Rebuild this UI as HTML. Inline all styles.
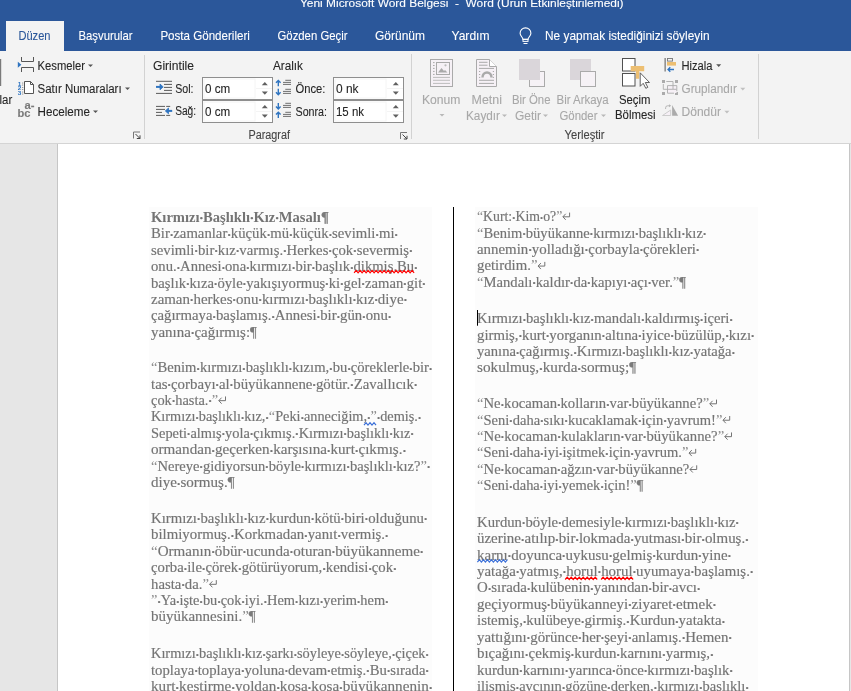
<!DOCTYPE html>
<html><head><meta charset="utf-8"><title>Word</title>
<style>html,body{margin:0;padding:0;width:851px;height:691px;overflow:hidden;background:#e6e6e6}</style>
</head><body><svg width="851" height="691" viewBox="0 0 851 691" style="display:block;will-change:transform"><rect x="0" y="0" width="851" height="51" fill="#2b579a"/><rect x="0" y="51" width="851" height="92" fill="#f3f3f3"/><rect x="0" y="143" width="851" height="1" fill="#d4d4d4"/><rect x="0" y="144" width="851" height="547" fill="#e6e6e6"/><rect x="57" y="144" width="793" height="547" fill="#c6c6c6"/><rect x="58" y="144" width="791" height="547" fill="#ffffff"/><rect x="6" y="21" width="58" height="30" fill="#f3f3f3"/><text x="300" y="7.3" font-size="11" fill="#ffffff" font-family="Liberation Sans" textLength="323.5" lengthAdjust="spacingAndGlyphs" stroke="#ffffff" stroke-width="0.1">Yeni Microsoft Word Belgesi  -  Word (Ürün Etkinleştirilemedi)</text><text x="18.4" y="40" font-size="13" fill="#2b579a" font-family="Liberation Sans" textLength="32.1" lengthAdjust="spacingAndGlyphs" stroke="#2b579a" stroke-width="0.1">Düzen</text><text x="78.5" y="40" font-size="13" fill="#ffffff" font-family="Liberation Sans" textLength="54.1" lengthAdjust="spacingAndGlyphs" stroke="#ffffff" stroke-width="0.1">Başvurular</text><text x="160.4" y="40" font-size="13" fill="#ffffff" font-family="Liberation Sans" textLength="89.5" lengthAdjust="spacingAndGlyphs" stroke="#ffffff" stroke-width="0.1">Posta Gönderileri</text><text x="277.5" y="40" font-size="13" fill="#ffffff" font-family="Liberation Sans" textLength="70.0" lengthAdjust="spacingAndGlyphs" stroke="#ffffff" stroke-width="0.1">Gözden Geçir</text><text x="375" y="40" font-size="13" fill="#ffffff" font-family="Liberation Sans" textLength="50" lengthAdjust="spacingAndGlyphs" stroke="#ffffff" stroke-width="0.1">Görünüm</text><text x="451.5" y="40" font-size="13" fill="#ffffff" font-family="Liberation Sans" textLength="38.0" lengthAdjust="spacingAndGlyphs" stroke="#ffffff" stroke-width="0.1">Yardım</text><text x="545" y="40" font-size="13" fill="#ffffff" font-family="Liberation Sans" textLength="164.5" lengthAdjust="spacingAndGlyphs" stroke="#ffffff" stroke-width="0.1">Ne yapmak istediğinizi söyleyin</text><rect x="0" y="59" width="1.2" height="27" fill="#7a7a7a"/><text x="-0.5" y="103.6" font-size="12" fill="#262626" font-family="Liberation Sans" textLength="12.7" lengthAdjust="spacingAndGlyphs" stroke="#262626" stroke-width="0.1">lar</text><path d="M17.8 61.8l3.6 3-3.6 3z" fill="#2f74c0"/><path d="M21.5 57v4.5h12v-4.5M21.5 72v-4.5h12v4.5" stroke="#555" fill="none" stroke-width="1"/><text x="37.5" y="69.7" font-size="12" fill="#262626" font-family="Liberation Sans" textLength="47.5" lengthAdjust="spacingAndGlyphs" stroke="#262626" stroke-width="0.1">Kesmeler</text><path d="M88 64.5h5l-2.5 2.6z" fill="#555"/><path d="M24.5 81.5h6l3 3v9h-9z" stroke="#555" fill="#fff" stroke-width="1"/><path d="M30.5 81.5v3h3" stroke="#555" fill="none" stroke-width="1"/><text x="17.8" y="85.9" font-family="Liberation Sans" font-weight="bold" font-size="5.2" fill="#2f74c0" textLength="3.6" lengthAdjust="spacingAndGlyphs">1</text><rect x="22.3" y="82.6" width="0.9" height="0.9" fill="#666"/><rect x="22.3" y="84.6" width="0.9" height="0.9" fill="#666"/><text x="17.8" y="90.4" font-family="Liberation Sans" font-weight="bold" font-size="5.2" fill="#2f74c0" textLength="3.6" lengthAdjust="spacingAndGlyphs">2</text><rect x="22.3" y="87.1" width="0.9" height="0.9" fill="#666"/><rect x="22.3" y="89.1" width="0.9" height="0.9" fill="#666"/><text x="17.8" y="94.9" font-family="Liberation Sans" font-weight="bold" font-size="5.2" fill="#2f74c0" textLength="3.6" lengthAdjust="spacingAndGlyphs">3</text><rect x="22.3" y="91.6" width="0.9" height="0.9" fill="#666"/><rect x="22.3" y="93.6" width="0.9" height="0.9" fill="#666"/><text x="37.5" y="92.5" font-size="12" fill="#262626" font-family="Liberation Sans" textLength="84.1" lengthAdjust="spacingAndGlyphs" stroke="#262626" stroke-width="0.1">Satır Numaraları</text><path d="M125 87.5h5l-2.5 2.6z" fill="#555"/><text x="17.5" y="117" font-size="11.5" fill="#7a7a7a" font-family="Liberation Sans" textLength="13" lengthAdjust="spacingAndGlyphs" font-weight="bold" stroke="#7a7a7a" stroke-width="0.1">bc</text><text x="24.5" y="109" font-size="10" fill="#7a7a7a" font-family="Liberation Sans" textLength="10" lengthAdjust="spacingAndGlyphs" font-weight="bold" stroke="#7a7a7a" stroke-width="0.1">a-</text><text x="37.5" y="115.8" font-size="12" fill="#262626" font-family="Liberation Sans" textLength="52.5" lengthAdjust="spacingAndGlyphs" stroke="#262626" stroke-width="0.1">Heceleme</text><path d="M93 110.5h5l-2.5 2.6z" fill="#555"/><path d="M133.5 138.5V132.0H140" stroke="#777" fill="none" stroke-width="1"/><path d="M135.5 134.0L140 138.5M140 135.3V138.5H136.8" stroke="#444" fill="none" stroke-width="1"/><rect x="144" y="55" width="1" height="84" fill="#d2d2d2"/><text x="153" y="69.7" font-size="12" fill="#262626" font-family="Liberation Sans" textLength="41" lengthAdjust="spacingAndGlyphs" stroke="#262626" stroke-width="0.1">Girintile</text><text x="273" y="69.7" font-size="12" fill="#262626" font-family="Liberation Sans" textLength="30" lengthAdjust="spacingAndGlyphs" stroke="#262626" stroke-width="0.1">Aralık</text><path d="M156 81.3h16M164 84.4h8M164 87.4h8M164 90.4h8M156 93.4h16" stroke="#5a5a5a" stroke-width="1" fill="none"/><path d="M156 86.9h4.5" stroke="#2f74c0" stroke-width="2"/><path d="M160 84l3.2 2.9-3.2 2.9z" fill="#2f74c0" stroke="#2f74c0" stroke-width="0.8" stroke-linejoin="round"/><text x="175.2" y="92.6" font-size="12" fill="#262626" font-family="Liberation Sans" textLength="18.3" lengthAdjust="spacingAndGlyphs" stroke="#262626" stroke-width="0.1">Sol:</text><path d="M156 106.4h9M166.2 106.4h4M156 109.4h9M156 112.4h6M156 115.4h9M166.2 115.4h4" stroke="#5a5a5a" stroke-width="1" fill="none"/><path d="M168 110.9h4.2" stroke="#2f74c0" stroke-width="2"/><path d="M168.5 108l-3.2 2.9 3.2 2.9z" fill="#2f74c0" stroke="#2f74c0" stroke-width="0.8" stroke-linejoin="round"/><text x="175.2" y="114.8" font-size="12" fill="#262626" font-family="Liberation Sans" textLength="20.9" lengthAdjust="spacingAndGlyphs" stroke="#262626" stroke-width="0.1">Sağ:</text><rect x="202.5" y="77.5" width="70" height="22" fill="#ffffff" stroke="#8e8e8e" stroke-width="1"/><rect x="204" y="79" width="51" height="19" fill="none" stroke="#f4f4f4" stroke-width="1"/><rect x="256" y="88" width="16" height="0.8" fill="#f2f2f2"/><path d="M261.8 85.2l3-3.1 3 3.1z" fill="#606060"/><path d="M261.8 91.6l3 3.1 3-3.1z" fill="#606060"/><text x="205" y="92.6" font-size="12" fill="#262626" font-family="Liberation Sans" textLength="25.2" lengthAdjust="spacingAndGlyphs" stroke="#262626" stroke-width="0.1">0 cm</text><rect x="202.5" y="100.5" width="70" height="22" fill="#ffffff" stroke="#8e8e8e" stroke-width="1"/><rect x="204" y="102" width="51" height="19" fill="none" stroke="#f4f4f4" stroke-width="1"/><rect x="256" y="111" width="16" height="0.8" fill="#f2f2f2"/><path d="M261.8 108.2l3-3.1 3 3.1z" fill="#606060"/><path d="M261.8 114.6l3 3.1 3-3.1z" fill="#606060"/><text x="205" y="115.6" font-size="12" fill="#262626" font-family="Liberation Sans" textLength="25.2" lengthAdjust="spacingAndGlyphs" stroke="#262626" stroke-width="0.1">0 cm</text><rect x="333.5" y="77.5" width="70" height="22" fill="#ffffff" stroke="#8e8e8e" stroke-width="1"/><rect x="335" y="79" width="51" height="19" fill="none" stroke="#f4f4f4" stroke-width="1"/><rect x="387" y="88" width="16" height="0.8" fill="#f2f2f2"/><path d="M392.8 85.2l3-3.1 3 3.1z" fill="#606060"/><path d="M392.8 91.6l3 3.1 3-3.1z" fill="#606060"/><text x="336" y="92.6" font-size="12" fill="#262626" font-family="Liberation Sans" textLength="22.5" lengthAdjust="spacingAndGlyphs" stroke="#262626" stroke-width="0.1">0 nk</text><rect x="333.5" y="100.5" width="70" height="22" fill="#ffffff" stroke="#8e8e8e" stroke-width="1"/><rect x="335" y="102" width="51" height="19" fill="none" stroke="#f4f4f4" stroke-width="1"/><rect x="387" y="111" width="16" height="0.8" fill="#f2f2f2"/><path d="M392.8 108.2l3-3.1 3 3.1z" fill="#606060"/><path d="M392.8 114.6l3 3.1 3-3.1z" fill="#606060"/><text x="336" y="115.6" font-size="12" fill="#262626" font-family="Liberation Sans" textLength="28" lengthAdjust="spacingAndGlyphs" stroke="#262626" stroke-width="0.1">15 nk</text><path d="M278.3 86.3V80.6M276 82.8l2.3-2.4 2.3 2.4M278.3 88.8V94.6M276 92.3l2.3 2.4 2.3-2.4" stroke="#2f74c0" stroke-width="1.4" fill="none"/><path d="M285.3 80.3h5.7M283 82.4h8M283 84.4h8" stroke="#5e5e5e" stroke-width="0.9" fill="none"/><path d="M285.3 89.3h5.7M283 91.4h8M283 93.4h8" stroke="#5e5e5e" stroke-width="0.9" fill="none"/><text x="295.5" y="92.6" font-size="12" fill="#262626" font-family="Liberation Sans" textLength="29.9" lengthAdjust="spacingAndGlyphs" stroke="#262626" stroke-width="0.1">Önce:</text><path d="M278.3 103V108.8M276 106.5l2.3 2.4 2.3-2.4M278.3 118.1V112.39999999999999M276 114.6l2.3-2.4 2.3 2.4" stroke="#2f74c0" stroke-width="1.4" fill="none"/><path d="M285.3 103.3h5.7M283 105.4h8M283 107.4h8" stroke="#5e5e5e" stroke-width="0.9" fill="none"/><path d="M285.3 112.3h5.7M283 114.4h8M283 116.4h8" stroke="#5e5e5e" stroke-width="0.9" fill="none"/><text x="295.5" y="115.6" font-size="12" fill="#262626" font-family="Liberation Sans" textLength="31.5" lengthAdjust="spacingAndGlyphs" stroke="#262626" stroke-width="0.1">Sonra:</text><text x="248.5" y="138.8" font-size="12" fill="#444444" font-family="Liberation Sans" textLength="41.5" lengthAdjust="spacingAndGlyphs" stroke="#444444" stroke-width="0.1">Paragraf</text><path d="M400.5 139V132.5H407" stroke="#777" fill="none" stroke-width="1"/><path d="M402.5 134.5L407 139M407 135.8V139H403.8" stroke="#444" fill="none" stroke-width="1"/><rect x="411" y="54" width="1" height="85" fill="#d2d2d2"/><rect x="430.5" y="59.5" width="22" height="27" fill="#f6f1f6" stroke="#aaaaaa" stroke-width="1"/><rect x="436.5" y="62.5" width="13" height="12" fill="none" stroke="#aaaaaa" stroke-width="1"/><rect x="433" y="62.1" width="1.6" height="1" fill="#aaaaaa"/><rect x="433" y="65.0" width="1.6" height="1" fill="#aaaaaa"/><rect x="433" y="67.9" width="1.6" height="1" fill="#aaaaaa"/><rect x="433" y="70.9" width="1.6" height="1" fill="#aaaaaa"/><rect x="433" y="73.9" width="1.6" height="1" fill="#aaaaaa"/><rect x="433" y="76.9" width="17" height="1" fill="#bdbdbd"/><rect x="433" y="79.8" width="17" height="1" fill="#bdbdbd"/><rect x="433" y="82.9" width="17" height="1" fill="#bdbdbd"/><path d="M438 72.5l3.5-4.5 2.5 3 1-1 2.5 2.5z" fill="#aaaaaa"/><circle cx="445.5" cy="65.3" r="1.1" fill="#bbbbbb"/><text x="422" y="104" font-size="12" fill="#a8a8a8" font-family="Liberation Sans" textLength="38.5" lengthAdjust="spacingAndGlyphs" stroke="#a8a8a8" stroke-width="0.1">Konum</text><path d="M439.5 114h5l-2.5 2.6z" fill="#b8b8b8"/><path d="M476.5 59.5h13l7 7v20h-20z" fill="#f6f1f6" stroke="#aaaaaa" stroke-width="1"/><path d="M489.5 59.5v7h7" fill="#ffffff" stroke="#aaaaaa" stroke-width="1"/><rect x="479" y="61.8" width="8.5" height="1" fill="#aaaaaa"/><rect x="479" y="64.7" width="8.5" height="1" fill="#aaaaaa"/><rect x="479" y="67.9" width="15" height="1" fill="#aaaaaa"/><rect x="479" y="79.8" width="15" height="1" fill="#aaaaaa"/><rect x="479" y="82.9" width="15" height="1" fill="#aaaaaa"/><rect x="479" y="71.0" width="1.2" height="1" fill="#aaaaaa"/><rect x="492.8" y="71.0" width="1.2" height="1" fill="#aaaaaa"/><rect x="479" y="74.0" width="1.2" height="1" fill="#aaaaaa"/><rect x="492.8" y="74.0" width="1.2" height="1" fill="#aaaaaa"/><rect x="479" y="76.9" width="1.2" height="1" fill="#aaaaaa"/><rect x="492.8" y="76.9" width="1.2" height="1" fill="#aaaaaa"/><path d="M482.5 77.5a4 4.5 0 0 1 9 0" stroke="#aaaaaa" stroke-width="2.4" fill="none"/><text x="471.6" y="104" font-size="12" fill="#a8a8a8" font-family="Liberation Sans" textLength="30.4" lengthAdjust="spacingAndGlyphs" stroke="#a8a8a8" stroke-width="0.1">Metni</text><text x="466" y="119.5" font-size="12" fill="#a8a8a8" font-family="Liberation Sans" textLength="34" lengthAdjust="spacingAndGlyphs" stroke="#a8a8a8" stroke-width="0.1">Kaydır</text><path d="M502 114.5h5l-2.5 2.6z" fill="#b8b8b8"/><rect x="529.5" y="71.5" width="15" height="15" fill="#f6f2f6" stroke="#aaaaaa" stroke-width="1"/><rect x="519" y="59" width="21" height="21" fill="#dad6da"/><text x="512" y="104" font-size="12" fill="#a8a8a8" font-family="Liberation Sans" textLength="38.5" lengthAdjust="spacingAndGlyphs" stroke="#a8a8a8" stroke-width="0.1">Bir Öne</text><text x="515" y="119.5" font-size="12" fill="#a8a8a8" font-family="Liberation Sans" textLength="26" lengthAdjust="spacingAndGlyphs" stroke="#a8a8a8" stroke-width="0.1">Getir</text><path d="M543 114.5h5l-2.5 2.6z" fill="#b8b8b8"/><rect x="570" y="59" width="21" height="21" fill="#dad6da"/><rect x="580.5" y="71.5" width="15" height="15" fill="#f6f2f6" stroke="#aaaaaa" stroke-width="1"/><text x="556.5" y="104" font-size="12" fill="#a8a8a8" font-family="Liberation Sans" textLength="52.1" lengthAdjust="spacingAndGlyphs" stroke="#a8a8a8" stroke-width="0.1">Bir Arkaya</text><text x="559.5" y="119.5" font-size="12" fill="#a8a8a8" font-family="Liberation Sans" textLength="38" lengthAdjust="spacingAndGlyphs" stroke="#a8a8a8" stroke-width="0.1">Gönder</text><path d="M601 114.5h5l-2.5 2.6z" fill="#b8b8b8"/><rect x="622.5" y="58.5" width="12.5" height="12.5" fill="#ffffff" stroke="#505050" stroke-width="1"/><rect x="622.5" y="73.5" width="12.5" height="12.5" fill="#ffffff" stroke="#505050" stroke-width="1"/><path d="M630.7 66h13.5v5.2h-5v7.6h-3.2v-7.6h-5.3z" fill="#edbf72"/><path d="M640.2 72.8v13.5l3-3 2.6 5 2-1-2.5-4.8h4.2z" fill="#ffffff" stroke="#505050" stroke-width="0.9" stroke-linejoin="round"/><text x="619" y="103.7" font-size="12" fill="#262626" font-family="Liberation Sans" textLength="31.5" lengthAdjust="spacingAndGlyphs" stroke="#262626" stroke-width="0.1">Seçim</text><text x="615" y="119.4" font-size="12" fill="#262626" font-family="Liberation Sans" textLength="40.5" lengthAdjust="spacingAndGlyphs" stroke="#262626" stroke-width="0.1">Bölmesi</text><rect x="664.6" y="58" width="1" height="13.5" fill="#555"/><rect x="667.5" y="58.5" width="5" height="2.6" fill="none" stroke="#777" stroke-width="0.9"/><rect x="667" y="62" width="9" height="3.6" fill="#edbf72"/><path d="M668 69.5h6M670.3 67.3l-2.3 2.2 2.3 2.2" stroke="#2f74c0" stroke-width="1.3" fill="none"/><text x="681.5" y="69.7" font-size="12" fill="#262626" font-family="Liberation Sans" textLength="31" lengthAdjust="spacingAndGlyphs" stroke="#262626" stroke-width="0.1">Hizala</text><path d="M716.2 64.3h5l-2.5 2.6z" fill="#555"/><rect x="662" y="80" width="3" height="3" fill="#ababab"/><rect x="675" y="80" width="3" height="3" fill="#ababab"/><rect x="662" y="92" width="3" height="3" fill="#ababab"/><rect x="675" y="92" width="3" height="3" fill="#ababab"/><rect x="667.5" y="85.5" width="9" height="7.5" fill="#f6f0f6"/><path d="M666.3 81.5h6.7v7.5M663.3 84v5.3h13.2M667.5 85.6h9.3v5.5M667.5 85.6v7.6h6.5" stroke="#ababab" stroke-width="0.9" fill="none"/><text x="681.5" y="92.6" font-size="12" fill="#a8a8a8" font-family="Liberation Sans" textLength="55.5" lengthAdjust="spacingAndGlyphs" stroke="#a8a8a8" stroke-width="0.1">Gruplandır</text><path d="M740.3 87.8h5l-2.5 2.6z" fill="#c0c0c0"/><path d="M662.5 115.5h8.2v-5.5z" fill="#f6f0f6" stroke="#c8c8c8" stroke-width="0.9" stroke-linejoin="round"/><path d="M672.1 105v10.8h6z" fill="#ababab"/><path d="M665.6 109v-1.2a2 2 0 0 1 2-2h2" stroke="#b5b5b5" stroke-width="1" fill="none"/><path d="M669 104.3l2.2 1.5-2.2 1.5z" fill="#b5b5b5"/><text x="681.5" y="115.5" font-size="12" fill="#a8a8a8" font-family="Liberation Sans" textLength="39.5" lengthAdjust="spacingAndGlyphs" stroke="#a8a8a8" stroke-width="0.1">Döndür</text><path d="M724.4 110.8h5l-2.5 2.6z" fill="#c0c0c0"/><text x="564.6" y="138.6" font-size="12" fill="#444444" font-family="Liberation Sans" textLength="40" lengthAdjust="spacingAndGlyphs" stroke="#444444" stroke-width="0.1">Yerleştir</text><rect x="758" y="54" width="1" height="85" fill="#d2d2d2"/><path d="M522.9 39.3c0-2-2.8-3.3-2.8-6a5.4 5.4 0 0 1 10.8 0c0 2.7-2.8 4-2.8 6z" fill="none" stroke="#ffffff" stroke-width="1.1"/><rect x="523" y="39.4" width="5" height="2" fill="none" stroke="#ffffff" stroke-width="1"/><rect x="523.5" y="43" width="4" height="1" fill="#ffffff"/><rect x="149" y="207" width="283" height="484" fill="#fcfcfc"/><rect x="475" y="207" width="283" height="484" fill="#fcfcfc"/><rect x="453" y="207" width="1" height="484" fill="#000000"/><text x="151" y="221.8" font-size="14.5" fill="#747474" font-family="Liberation Serif" textLength="177.8" lengthAdjust="spacingAndGlyphs" font-weight="bold" stroke="#747474" stroke-width="0">Kırmızı<tspan dx="0.1" dy="-0.5" font-size="9.2">•</tspan><tspan dx="0.1" dy="0.5" font-size="14.5">Başlıklı</tspan><tspan dx="0.1" dy="-0.5" font-size="9.2">•</tspan><tspan dx="0.1" dy="0.5" font-size="14.5">Kız</tspan><tspan dx="0.1" dy="-0.5" font-size="9.2">•</tspan><tspan dx="0.1" dy="0.5" font-size="14.5">Masalı<tspan stroke-width="0.25" fill="#7a7a7a" stroke="#7a7a7a">¶</tspan></tspan></text><text x="151" y="238.23" font-size="14.5" fill="#747474" font-family="Liberation Serif" textLength="246.9" lengthAdjust="spacingAndGlyphs" stroke="#747474" stroke-width="0.16">Bir<tspan dx="0.1" dy="-0.5" font-size="9.2">•</tspan><tspan dx="0.1" dy="0.5" font-size="14.5">zamanlar</tspan><tspan dx="0.1" dy="-0.5" font-size="9.2">•</tspan><tspan dx="0.1" dy="0.5" font-size="14.5">küçük</tspan><tspan dx="0.1" dy="-0.5" font-size="9.2">•</tspan><tspan dx="0.1" dy="0.5" font-size="14.5">mü</tspan><tspan dx="0.1" dy="-0.5" font-size="9.2">•</tspan><tspan dx="0.1" dy="0.5" font-size="14.5">küçük</tspan><tspan dx="0.1" dy="-0.5" font-size="9.2">•</tspan><tspan dx="0.1" dy="0.5" font-size="14.5">sevimli</tspan><tspan dx="0.1" dy="-0.5" font-size="9.2">•</tspan><tspan dx="0.1" dy="0.5" font-size="14.5">mi</tspan><tspan dx="0.1" dy="-0.5" font-size="9.2">•</tspan></text><text x="151" y="254.66" font-size="14.5" fill="#747474" font-family="Liberation Serif" textLength="261.5" lengthAdjust="spacingAndGlyphs" stroke="#747474" stroke-width="0.16">sevimli<tspan dx="0.1" dy="-0.5" font-size="9.2">•</tspan><tspan dx="0.1" dy="0.5" font-size="14.5">bir</tspan><tspan dx="0.1" dy="-0.5" font-size="9.2">•</tspan><tspan dx="0.1" dy="0.5" font-size="14.5">kız</tspan><tspan dx="0.1" dy="-0.5" font-size="9.2">•</tspan><tspan dx="0.1" dy="0.5" font-size="14.5">varmış.</tspan><tspan dx="0.1" dy="-0.5" font-size="9.2">•</tspan><tspan dx="0.1" dy="0.5" font-size="14.5">Herkes</tspan><tspan dx="0.1" dy="-0.5" font-size="9.2">•</tspan><tspan dx="0.1" dy="0.5" font-size="14.5">çok</tspan><tspan dx="0.1" dy="-0.5" font-size="9.2">•</tspan><tspan dx="0.1" dy="0.5" font-size="14.5">severmiş</tspan><tspan dx="0.1" dy="-0.5" font-size="9.2">•</tspan></text><text x="151" y="271.09" font-size="14.5" fill="#747474" font-family="Liberation Serif" textLength="266.5" lengthAdjust="spacingAndGlyphs" stroke="#747474" stroke-width="0.16">onu.<tspan dx="0.1" dy="-0.5" font-size="9.2">•</tspan><tspan dx="0.1" dy="0.5" font-size="14.5">Annesi</tspan><tspan dx="0.1" dy="-0.5" font-size="9.2">•</tspan><tspan dx="0.1" dy="0.5" font-size="14.5">ona</tspan><tspan dx="0.1" dy="-0.5" font-size="9.2">•</tspan><tspan dx="0.1" dy="0.5" font-size="14.5">kırmızı</tspan><tspan dx="0.1" dy="-0.5" font-size="9.2">•</tspan><tspan dx="0.1" dy="0.5" font-size="14.5">bir</tspan><tspan dx="0.1" dy="-0.5" font-size="9.2">•</tspan><tspan dx="0.1" dy="0.5" font-size="14.5">başlık</tspan><tspan dx="0.1" dy="-0.5" font-size="9.2">•</tspan><tspan dx="0.1" dy="0.5" font-size="14.5">dikmiş.Bu</tspan><tspan dx="0.1" dy="-0.5" font-size="9.2">•</tspan></text><text x="151" y="287.52" font-size="14.5" fill="#747474" font-family="Liberation Serif" textLength="274.6" lengthAdjust="spacingAndGlyphs" stroke="#747474" stroke-width="0.16">başlık<tspan dx="0.1" dy="-0.5" font-size="9.2">•</tspan><tspan dx="0.1" dy="0.5" font-size="14.5">kıza</tspan><tspan dx="0.1" dy="-0.5" font-size="9.2">•</tspan><tspan dx="0.1" dy="0.5" font-size="14.5">öyle</tspan><tspan dx="0.1" dy="-0.5" font-size="9.2">•</tspan><tspan dx="0.1" dy="0.5" font-size="14.5">yakışıyormuş</tspan><tspan dx="0.1" dy="-0.5" font-size="9.2">•</tspan><tspan dx="0.1" dy="0.5" font-size="14.5">ki</tspan><tspan dx="0.1" dy="-0.5" font-size="9.2">•</tspan><tspan dx="0.1" dy="0.5" font-size="14.5">gel</tspan><tspan dx="0.1" dy="-0.5" font-size="9.2">•</tspan><tspan dx="0.1" dy="0.5" font-size="14.5">zaman</tspan><tspan dx="0.1" dy="-0.5" font-size="9.2">•</tspan><tspan dx="0.1" dy="0.5" font-size="14.5">git</tspan><tspan dx="0.1" dy="-0.5" font-size="9.2">•</tspan></text><text x="151" y="303.95" font-size="14.5" fill="#747474" font-family="Liberation Serif" textLength="256.0" lengthAdjust="spacingAndGlyphs" stroke="#747474" stroke-width="0.16">zaman<tspan dx="0.1" dy="-0.5" font-size="9.2">•</tspan><tspan dx="0.1" dy="0.5" font-size="14.5">herkes</tspan><tspan dx="0.1" dy="-0.5" font-size="9.2">•</tspan><tspan dx="0.1" dy="0.5" font-size="14.5">onu</tspan><tspan dx="0.1" dy="-0.5" font-size="9.2">•</tspan><tspan dx="0.1" dy="0.5" font-size="14.5">kırmızı</tspan><tspan dx="0.1" dy="-0.5" font-size="9.2">•</tspan><tspan dx="0.1" dy="0.5" font-size="14.5">başlıklı</tspan><tspan dx="0.1" dy="-0.5" font-size="9.2">•</tspan><tspan dx="0.1" dy="0.5" font-size="14.5">kız</tspan><tspan dx="0.1" dy="-0.5" font-size="9.2">•</tspan><tspan dx="0.1" dy="0.5" font-size="14.5">diye</tspan><tspan dx="0.1" dy="-0.5" font-size="9.2">•</tspan></text><text x="151" y="320.38" font-size="14.5" fill="#747474" font-family="Liberation Serif" textLength="240.2" lengthAdjust="spacingAndGlyphs" stroke="#747474" stroke-width="0.16">çağırmaya<tspan dx="0.1" dy="-0.5" font-size="9.2">•</tspan><tspan dx="0.1" dy="0.5" font-size="14.5">başlamış.</tspan><tspan dx="0.1" dy="-0.5" font-size="9.2">•</tspan><tspan dx="0.1" dy="0.5" font-size="14.5">Annesi</tspan><tspan dx="0.1" dy="-0.5" font-size="9.2">•</tspan><tspan dx="0.1" dy="0.5" font-size="14.5">bir</tspan><tspan dx="0.1" dy="-0.5" font-size="9.2">•</tspan><tspan dx="0.1" dy="0.5" font-size="14.5">gün</tspan><tspan dx="0.1" dy="-0.5" font-size="9.2">•</tspan><tspan dx="0.1" dy="0.5" font-size="14.5">onu</tspan><tspan dx="0.1" dy="-0.5" font-size="9.2">•</tspan></text><text x="151" y="336.81" font-size="14.5" fill="#747474" font-family="Liberation Serif" textLength="105.9" lengthAdjust="spacingAndGlyphs" stroke="#747474" stroke-width="0.16">yanına<tspan dx="0.1" dy="-0.5" font-size="9.2">•</tspan><tspan dx="0.1" dy="0.5" font-size="14.5">çağırmış:<tspan stroke-width="0.25" fill="#7a7a7a" stroke="#7a7a7a">¶</tspan></tspan></text><text x="151" y="372.1" font-size="14.5" fill="#747474" font-family="Liberation Serif" textLength="281.3" lengthAdjust="spacingAndGlyphs" stroke="#747474" stroke-width="0.16"><tspan stroke-width="0" fill="#8a8a8a">“</tspan>Benim<tspan dx="0.1" dy="-0.5" font-size="9.2">•</tspan><tspan dx="0.1" dy="0.5" font-size="14.5">kırmızı</tspan><tspan dx="0.1" dy="-0.5" font-size="9.2">•</tspan><tspan dx="0.1" dy="0.5" font-size="14.5">başlıklı</tspan><tspan dx="0.1" dy="-0.5" font-size="9.2">•</tspan><tspan dx="0.1" dy="0.5" font-size="14.5">kızım,</tspan><tspan dx="0.1" dy="-0.5" font-size="9.2">•</tspan><tspan dx="0.1" dy="0.5" font-size="14.5">bu</tspan><tspan dx="0.1" dy="-0.5" font-size="9.2">•</tspan><tspan dx="0.1" dy="0.5" font-size="14.5">çöreklerle</tspan><tspan dx="0.1" dy="-0.5" font-size="9.2">•</tspan><tspan dx="0.1" dy="0.5" font-size="14.5">bir</tspan><tspan dx="0.1" dy="-0.5" font-size="9.2">•</tspan></text><text x="151" y="388.53" font-size="14.5" fill="#747474" font-family="Liberation Serif" textLength="266.3" lengthAdjust="spacingAndGlyphs" stroke="#747474" stroke-width="0.16">tas<tspan dx="0.1" dy="-0.5" font-size="9.2">•</tspan><tspan dx="0.1" dy="0.5" font-size="14.5">çorbayı</tspan><tspan dx="0.1" dy="-0.5" font-size="9.2">•</tspan><tspan dx="0.1" dy="0.5" font-size="14.5">al</tspan><tspan dx="0.1" dy="-0.5" font-size="9.2">•</tspan><tspan dx="0.1" dy="0.5" font-size="14.5">büyükannene</tspan><tspan dx="0.1" dy="-0.5" font-size="9.2">•</tspan><tspan dx="0.1" dy="0.5" font-size="14.5">götür.</tspan><tspan dx="0.1" dy="-0.5" font-size="9.2">•</tspan><tspan dx="0.1" dy="0.5" font-size="14.5">Zavallıcık</tspan><tspan dx="0.1" dy="-0.5" font-size="9.2">•</tspan></text><path d="M225.50 396.46V400.66H218.80M221.60 397.66L218.80 400.66L221.60 403.66" stroke="#747474" stroke-width="1" fill="none"/><text x="151" y="404.96" font-size="14.5" fill="#747474" font-family="Liberation Serif" textLength="67.2" lengthAdjust="spacingAndGlyphs" stroke="#747474" stroke-width="0.16">çok<tspan dx="0.1" dy="-0.5" font-size="9.2">•</tspan><tspan dx="0.1" dy="0.5" font-size="14.5">hasta.</tspan><tspan dx="0.1" dy="-0.5" font-size="9.2">•</tspan><tspan dx="0.1" dy="0.5" font-size="14.5"><tspan stroke-width="0" fill="#8a8a8a">”</tspan></tspan></text><text x="151" y="421.39" font-size="14.5" fill="#747474" font-family="Liberation Serif" textLength="270.2" lengthAdjust="spacingAndGlyphs" stroke="#747474" stroke-width="0.16">Kırmızı<tspan dx="0.1" dy="-0.5" font-size="9.2">•</tspan><tspan dx="0.1" dy="0.5" font-size="14.5">başlıklı</tspan><tspan dx="0.1" dy="-0.5" font-size="9.2">•</tspan><tspan dx="0.1" dy="0.5" font-size="14.5">kız,</tspan><tspan dx="0.1" dy="-0.5" font-size="9.2">•</tspan><tspan dx="0.1" dy="0.5" font-size="14.5"><tspan stroke-width="0" fill="#8a8a8a">“</tspan>Peki</tspan><tspan dx="0.1" dy="-0.5" font-size="9.2">•</tspan><tspan dx="0.1" dy="0.5" font-size="14.5">anneciğim,</tspan><tspan dx="0.1" dy="-0.5" font-size="9.2">•</tspan><tspan dx="0.1" dy="0.5" font-size="14.5"><tspan stroke-width="0" fill="#8a8a8a">”</tspan></tspan><tspan dx="0.1" dy="-0.5" font-size="9.2">•</tspan><tspan dx="0.1" dy="0.5" font-size="14.5">demiş.</tspan><tspan dx="0.1" dy="-0.5" font-size="9.2">•</tspan></text><text x="151" y="437.82" font-size="14.5" fill="#747474" font-family="Liberation Serif" textLength="262.6" lengthAdjust="spacingAndGlyphs" stroke="#747474" stroke-width="0.16">Sepeti<tspan dx="0.1" dy="-0.5" font-size="9.2">•</tspan><tspan dx="0.1" dy="0.5" font-size="14.5">almış</tspan><tspan dx="0.1" dy="-0.5" font-size="9.2">•</tspan><tspan dx="0.1" dy="0.5" font-size="14.5">yola</tspan><tspan dx="0.1" dy="-0.5" font-size="9.2">•</tspan><tspan dx="0.1" dy="0.5" font-size="14.5">çıkmış.</tspan><tspan dx="0.1" dy="-0.5" font-size="9.2">•</tspan><tspan dx="0.1" dy="0.5" font-size="14.5">Kırmızı</tspan><tspan dx="0.1" dy="-0.5" font-size="9.2">•</tspan><tspan dx="0.1" dy="0.5" font-size="14.5">başlıklı</tspan><tspan dx="0.1" dy="-0.5" font-size="9.2">•</tspan><tspan dx="0.1" dy="0.5" font-size="14.5">kız</tspan><tspan dx="0.1" dy="-0.5" font-size="9.2">•</tspan></text><text x="151" y="454.25" font-size="14.5" fill="#747474" font-family="Liberation Serif" textLength="255.0" lengthAdjust="spacingAndGlyphs" stroke="#747474" stroke-width="0.16">ormandan<tspan dx="0.1" dy="-0.5" font-size="9.2">•</tspan><tspan dx="0.1" dy="0.5" font-size="14.5">geçerken</tspan><tspan dx="0.1" dy="-0.5" font-size="9.2">•</tspan><tspan dx="0.1" dy="0.5" font-size="14.5">karşısına</tspan><tspan dx="0.1" dy="-0.5" font-size="9.2">•</tspan><tspan dx="0.1" dy="0.5" font-size="14.5">kurt</tspan><tspan dx="0.1" dy="-0.5" font-size="9.2">•</tspan><tspan dx="0.1" dy="0.5" font-size="14.5">çıkmış.</tspan><tspan dx="0.1" dy="-0.5" font-size="9.2">•</tspan></text><text x="151" y="470.68" font-size="14.5" fill="#747474" font-family="Liberation Serif" textLength="279.3" lengthAdjust="spacingAndGlyphs" stroke="#747474" stroke-width="0.16"><tspan stroke-width="0" fill="#8a8a8a">“</tspan>Nereye<tspan dx="0.1" dy="-0.5" font-size="9.2">•</tspan><tspan dx="0.1" dy="0.5" font-size="14.5">gidiyorsun</tspan><tspan dx="0.1" dy="-0.5" font-size="9.2">•</tspan><tspan dx="0.1" dy="0.5" font-size="14.5">böyle</tspan><tspan dx="0.1" dy="-0.5" font-size="9.2">•</tspan><tspan dx="0.1" dy="0.5" font-size="14.5">kırmızı</tspan><tspan dx="0.1" dy="-0.5" font-size="9.2">•</tspan><tspan dx="0.1" dy="0.5" font-size="14.5">başlıklı</tspan><tspan dx="0.1" dy="-0.5" font-size="9.2">•</tspan><tspan dx="0.1" dy="0.5" font-size="14.5">kız?<tspan stroke-width="0" fill="#8a8a8a">”</tspan></tspan><tspan dx="0.1" dy="-0.5" font-size="9.2">•</tspan></text><text x="151" y="487.11" font-size="14.5" fill="#747474" font-family="Liberation Serif" textLength="83.6" lengthAdjust="spacingAndGlyphs" stroke="#747474" stroke-width="0.16">diye<tspan dx="0.1" dy="-0.5" font-size="9.2">•</tspan><tspan dx="0.1" dy="0.5" font-size="14.5">sormuş.<tspan stroke-width="0.25" fill="#7a7a7a" stroke="#7a7a7a">¶</tspan></tspan></text><text x="151" y="522.9" font-size="14.5" fill="#747474" font-family="Liberation Serif" textLength="276.4" lengthAdjust="spacingAndGlyphs" stroke="#747474" stroke-width="0.16">Kırmızı<tspan dx="0.1" dy="-0.5" font-size="9.2">•</tspan><tspan dx="0.1" dy="0.5" font-size="14.5">başlıklı</tspan><tspan dx="0.1" dy="-0.5" font-size="9.2">•</tspan><tspan dx="0.1" dy="0.5" font-size="14.5">kız</tspan><tspan dx="0.1" dy="-0.5" font-size="9.2">•</tspan><tspan dx="0.1" dy="0.5" font-size="14.5">kurdun</tspan><tspan dx="0.1" dy="-0.5" font-size="9.2">•</tspan><tspan dx="0.1" dy="0.5" font-size="14.5">kötü</tspan><tspan dx="0.1" dy="-0.5" font-size="9.2">•</tspan><tspan dx="0.1" dy="0.5" font-size="14.5">biri</tspan><tspan dx="0.1" dy="-0.5" font-size="9.2">•</tspan><tspan dx="0.1" dy="0.5" font-size="14.5">olduğunu</tspan><tspan dx="0.1" dy="-0.5" font-size="9.2">•</tspan></text><text x="151" y="539.33" font-size="14.5" fill="#747474" font-family="Liberation Serif" textLength="237.4" lengthAdjust="spacingAndGlyphs" stroke="#747474" stroke-width="0.16">bilmiyormuş.<tspan dx="0.1" dy="-0.5" font-size="9.2">•</tspan><tspan dx="0.1" dy="0.5" font-size="14.5">Korkmadan</tspan><tspan dx="0.1" dy="-0.5" font-size="9.2">•</tspan><tspan dx="0.1" dy="0.5" font-size="14.5">yanıt</tspan><tspan dx="0.1" dy="-0.5" font-size="9.2">•</tspan><tspan dx="0.1" dy="0.5" font-size="14.5">vermiş.</tspan><tspan dx="0.1" dy="-0.5" font-size="9.2">•</tspan></text><text x="151" y="555.76" font-size="14.5" fill="#747474" font-family="Liberation Serif" textLength="272.4" lengthAdjust="spacingAndGlyphs" stroke="#747474" stroke-width="0.16"><tspan stroke-width="0" fill="#8a8a8a">“</tspan>Ormanın<tspan dx="0.1" dy="-0.5" font-size="9.2">•</tspan><tspan dx="0.1" dy="0.5" font-size="14.5">öbür</tspan><tspan dx="0.1" dy="-0.5" font-size="9.2">•</tspan><tspan dx="0.1" dy="0.5" font-size="14.5">ucunda</tspan><tspan dx="0.1" dy="-0.5" font-size="9.2">•</tspan><tspan dx="0.1" dy="0.5" font-size="14.5">oturan</tspan><tspan dx="0.1" dy="-0.5" font-size="9.2">•</tspan><tspan dx="0.1" dy="0.5" font-size="14.5">büyükanneme</tspan><tspan dx="0.1" dy="-0.5" font-size="9.2">•</tspan></text><text x="151" y="572.19" font-size="14.5" fill="#747474" font-family="Liberation Serif" textLength="245.5" lengthAdjust="spacingAndGlyphs" stroke="#747474" stroke-width="0.16">çorba<tspan dx="0.1" dy="-0.5" font-size="9.2">•</tspan><tspan dx="0.1" dy="0.5" font-size="14.5">ile</tspan><tspan dx="0.1" dy="-0.5" font-size="9.2">•</tspan><tspan dx="0.1" dy="0.5" font-size="14.5">çörek</tspan><tspan dx="0.1" dy="-0.5" font-size="9.2">•</tspan><tspan dx="0.1" dy="0.5" font-size="14.5">götürüyorum,</tspan><tspan dx="0.1" dy="-0.5" font-size="9.2">•</tspan><tspan dx="0.1" dy="0.5" font-size="14.5">kendisi</tspan><tspan dx="0.1" dy="-0.5" font-size="9.2">•</tspan><tspan dx="0.1" dy="0.5" font-size="14.5">çok</tspan><tspan dx="0.1" dy="-0.5" font-size="9.2">•</tspan></text><path d="M216.30 580.12V584.32H209.60M212.40 581.32L209.60 584.32L212.40 587.32" stroke="#747474" stroke-width="1" fill="none"/><text x="151" y="588.62" font-size="14.5" fill="#747474" font-family="Liberation Serif" textLength="58.0" lengthAdjust="spacingAndGlyphs" stroke="#747474" stroke-width="0.16">hasta<tspan dx="0.1" dy="-0.5" font-size="9.2">•</tspan><tspan dx="0.1" dy="0.5" font-size="14.5">da.<tspan stroke-width="0" fill="#8a8a8a">”</tspan></tspan></text><text x="151" y="605.05" font-size="14.5" fill="#747474" font-family="Liberation Serif" textLength="237.4" lengthAdjust="spacingAndGlyphs" stroke="#747474" stroke-width="0.16"><tspan stroke-width="0" fill="#8a8a8a">”</tspan><tspan dx="0.1" dy="-0.5" font-size="9.2">•</tspan><tspan dx="0.1" dy="0.5" font-size="14.5">Ya</tspan><tspan dx="0.1" dy="-0.5" font-size="9.2">•</tspan><tspan dx="0.1" dy="0.5" font-size="14.5">işte</tspan><tspan dx="0.1" dy="-0.5" font-size="9.2">•</tspan><tspan dx="0.1" dy="0.5" font-size="14.5">bu</tspan><tspan dx="0.1" dy="-0.5" font-size="9.2">•</tspan><tspan dx="0.1" dy="0.5" font-size="14.5">çok</tspan><tspan dx="0.1" dy="-0.5" font-size="9.2">•</tspan><tspan dx="0.1" dy="0.5" font-size="14.5">iyi.</tspan><tspan dx="0.1" dy="-0.5" font-size="9.2">•</tspan><tspan dx="0.1" dy="0.5" font-size="14.5">Hem</tspan><tspan dx="0.1" dy="-0.5" font-size="9.2">•</tspan><tspan dx="0.1" dy="0.5" font-size="14.5">kızı</tspan><tspan dx="0.1" dy="-0.5" font-size="9.2">•</tspan><tspan dx="0.1" dy="0.5" font-size="14.5">yerim</tspan><tspan dx="0.1" dy="-0.5" font-size="9.2">•</tspan><tspan dx="0.1" dy="0.5" font-size="14.5">hem</tspan><tspan dx="0.1" dy="-0.5" font-size="9.2">•</tspan></text><text x="151" y="621.48" font-size="14.5" fill="#747474" font-family="Liberation Serif" textLength="104.6" lengthAdjust="spacingAndGlyphs" stroke="#747474" stroke-width="0.16">büyükannesini.<tspan stroke-width="0" fill="#8a8a8a">”</tspan><tspan stroke-width="0.25" fill="#7a7a7a" stroke="#7a7a7a">¶</tspan></text><text x="151" y="658.2" font-size="14.5" fill="#747474" font-family="Liberation Serif" textLength="277.8" lengthAdjust="spacingAndGlyphs" stroke="#747474" stroke-width="0.16">Kırmızı<tspan dx="0.1" dy="-0.5" font-size="9.2">•</tspan><tspan dx="0.1" dy="0.5" font-size="14.5">başlıklı</tspan><tspan dx="0.1" dy="-0.5" font-size="9.2">•</tspan><tspan dx="0.1" dy="0.5" font-size="14.5">kız</tspan><tspan dx="0.1" dy="-0.5" font-size="9.2">•</tspan><tspan dx="0.1" dy="0.5" font-size="14.5">şarkı</tspan><tspan dx="0.1" dy="-0.5" font-size="9.2">•</tspan><tspan dx="0.1" dy="0.5" font-size="14.5">söyleye</tspan><tspan dx="0.1" dy="-0.5" font-size="9.2">•</tspan><tspan dx="0.1" dy="0.5" font-size="14.5">söyleye,</tspan><tspan dx="0.1" dy="-0.5" font-size="9.2">•</tspan><tspan dx="0.1" dy="0.5" font-size="14.5">çiçek</tspan><tspan dx="0.1" dy="-0.5" font-size="9.2">•</tspan></text><text x="151" y="674.63" font-size="14.5" fill="#747474" font-family="Liberation Serif" textLength="277.8" lengthAdjust="spacingAndGlyphs" stroke="#747474" stroke-width="0.16">toplaya<tspan dx="0.1" dy="-0.5" font-size="9.2">•</tspan><tspan dx="0.1" dy="0.5" font-size="14.5">toplaya</tspan><tspan dx="0.1" dy="-0.5" font-size="9.2">•</tspan><tspan dx="0.1" dy="0.5" font-size="14.5">yoluna</tspan><tspan dx="0.1" dy="-0.5" font-size="9.2">•</tspan><tspan dx="0.1" dy="0.5" font-size="14.5">devam</tspan><tspan dx="0.1" dy="-0.5" font-size="9.2">•</tspan><tspan dx="0.1" dy="0.5" font-size="14.5">etmiş.</tspan><tspan dx="0.1" dy="-0.5" font-size="9.2">•</tspan><tspan dx="0.1" dy="0.5" font-size="14.5">Bu</tspan><tspan dx="0.1" dy="-0.5" font-size="9.2">•</tspan><tspan dx="0.1" dy="0.5" font-size="14.5">sırada</tspan><tspan dx="0.1" dy="-0.5" font-size="9.2">•</tspan></text><text x="151" y="691.06" font-size="14.5" fill="#747474" font-family="Liberation Serif" textLength="281.3" lengthAdjust="spacingAndGlyphs" stroke="#747474" stroke-width="0.16">kurt<tspan dx="0.1" dy="-0.5" font-size="9.2">•</tspan><tspan dx="0.1" dy="0.5" font-size="14.5">kestirme</tspan><tspan dx="0.1" dy="-0.5" font-size="9.2">•</tspan><tspan dx="0.1" dy="0.5" font-size="14.5">yoldan</tspan><tspan dx="0.1" dy="-0.5" font-size="9.2">•</tspan><tspan dx="0.1" dy="0.5" font-size="14.5">koşa</tspan><tspan dx="0.1" dy="-0.5" font-size="9.2">•</tspan><tspan dx="0.1" dy="0.5" font-size="14.5">koşa</tspan><tspan dx="0.1" dy="-0.5" font-size="9.2">•</tspan><tspan dx="0.1" dy="0.5" font-size="14.5">büyükannenin</tspan><tspan dx="0.1" dy="-0.5" font-size="9.2">•</tspan></text><path d="M569.60 212.60V216.80H562.90M565.70 213.80L562.90 216.80L565.70 219.80" stroke="#747474" stroke-width="1" fill="none"/><text x="477" y="221.1" font-size="14.5" fill="#747474" font-family="Liberation Serif" textLength="85.3" lengthAdjust="spacingAndGlyphs" stroke="#747474" stroke-width="0.16"><tspan stroke-width="0" fill="#8a8a8a">“</tspan>Kurt:<tspan dx="0.1" dy="-0.5" font-size="9.2">•</tspan><tspan dx="0.1" dy="0.5" font-size="14.5">Kim</tspan><tspan dx="0.1" dy="-0.5" font-size="9.2">•</tspan><tspan dx="0.1" dy="0.5" font-size="14.5">o?<tspan stroke-width="0" fill="#8a8a8a">”</tspan></tspan></text><text x="477" y="237.53" font-size="14.5" fill="#747474" font-family="Liberation Serif" textLength="229.2" lengthAdjust="spacingAndGlyphs" stroke="#747474" stroke-width="0.16"><tspan stroke-width="0" fill="#8a8a8a">“</tspan>Benim<tspan dx="0.1" dy="-0.5" font-size="9.2">•</tspan><tspan dx="0.1" dy="0.5" font-size="14.5">büyükanne</tspan><tspan dx="0.1" dy="-0.5" font-size="9.2">•</tspan><tspan dx="0.1" dy="0.5" font-size="14.5">kırmızı</tspan><tspan dx="0.1" dy="-0.5" font-size="9.2">•</tspan><tspan dx="0.1" dy="0.5" font-size="14.5">başlıklı</tspan><tspan dx="0.1" dy="-0.5" font-size="9.2">•</tspan><tspan dx="0.1" dy="0.5" font-size="14.5">kız</tspan><tspan dx="0.1" dy="-0.5" font-size="9.2">•</tspan></text><text x="477" y="253.96" font-size="14.5" fill="#747474" font-family="Liberation Serif" textLength="222.4" lengthAdjust="spacingAndGlyphs" stroke="#747474" stroke-width="0.16">annemin<tspan dx="0.1" dy="-0.5" font-size="9.2">•</tspan><tspan dx="0.1" dy="0.5" font-size="14.5">yolladığı</tspan><tspan dx="0.1" dy="-0.5" font-size="9.2">•</tspan><tspan dx="0.1" dy="0.5" font-size="14.5">çorbayla</tspan><tspan dx="0.1" dy="-0.5" font-size="9.2">•</tspan><tspan dx="0.1" dy="0.5" font-size="14.5">çörekleri</tspan><tspan dx="0.1" dy="-0.5" font-size="9.2">•</tspan></text><path d="M544.80 261.89V266.09H538.10M540.90 263.09L538.10 266.09L540.90 269.09" stroke="#747474" stroke-width="1" fill="none"/><text x="477" y="270.39" font-size="14.5" fill="#747474" font-family="Liberation Serif" textLength="60.5" lengthAdjust="spacingAndGlyphs" stroke="#747474" stroke-width="0.16">getirdim.<tspan stroke-width="0" fill="#8a8a8a">”</tspan></text><text x="477" y="286.82" font-size="14.5" fill="#747474" font-family="Liberation Serif" textLength="209.0" lengthAdjust="spacingAndGlyphs" stroke="#747474" stroke-width="0.16"><tspan stroke-width="0" fill="#8a8a8a">“</tspan>Mandalı<tspan dx="0.1" dy="-0.5" font-size="9.2">•</tspan><tspan dx="0.1" dy="0.5" font-size="14.5">kaldır</tspan><tspan dx="0.1" dy="-0.5" font-size="9.2">•</tspan><tspan dx="0.1" dy="0.5" font-size="14.5">da</tspan><tspan dx="0.1" dy="-0.5" font-size="9.2">•</tspan><tspan dx="0.1" dy="0.5" font-size="14.5">kapıyı</tspan><tspan dx="0.1" dy="-0.5" font-size="9.2">•</tspan><tspan dx="0.1" dy="0.5" font-size="14.5">açı</tspan><tspan dx="0.1" dy="-0.5" font-size="9.2">•</tspan><tspan dx="0.1" dy="0.5" font-size="14.5">ver.<tspan stroke-width="0" fill="#8a8a8a">”</tspan><tspan stroke-width="0.25" fill="#7a7a7a" stroke="#7a7a7a">¶</tspan></tspan></text><text x="477" y="323.2" font-size="14.5" fill="#747474" font-family="Liberation Serif" textLength="255.8" lengthAdjust="spacingAndGlyphs" stroke="#747474" stroke-width="0.16">Kırmızı<tspan dx="0.1" dy="-0.5" font-size="9.2">•</tspan><tspan dx="0.1" dy="0.5" font-size="14.5">başlıklı</tspan><tspan dx="0.1" dy="-0.5" font-size="9.2">•</tspan><tspan dx="0.1" dy="0.5" font-size="14.5">kız</tspan><tspan dx="0.1" dy="-0.5" font-size="9.2">•</tspan><tspan dx="0.1" dy="0.5" font-size="14.5">mandalı</tspan><tspan dx="0.1" dy="-0.5" font-size="9.2">•</tspan><tspan dx="0.1" dy="0.5" font-size="14.5">kaldırmış</tspan><tspan dx="0.1" dy="-0.5" font-size="9.2">•</tspan><tspan dx="0.1" dy="0.5" font-size="14.5">içeri</tspan><tspan dx="0.1" dy="-0.5" font-size="9.2">•</tspan></text><text x="477" y="339.63" font-size="14.5" fill="#747474" font-family="Liberation Serif" textLength="277.4" lengthAdjust="spacingAndGlyphs" stroke="#747474" stroke-width="0.16">girmiş,<tspan dx="0.1" dy="-0.5" font-size="9.2">•</tspan><tspan dx="0.1" dy="0.5" font-size="14.5">kurt</tspan><tspan dx="0.1" dy="-0.5" font-size="9.2">•</tspan><tspan dx="0.1" dy="0.5" font-size="14.5">yorganın</tspan><tspan dx="0.1" dy="-0.5" font-size="9.2">•</tspan><tspan dx="0.1" dy="0.5" font-size="14.5">altına</tspan><tspan dx="0.1" dy="-0.5" font-size="9.2">•</tspan><tspan dx="0.1" dy="0.5" font-size="14.5">iyice</tspan><tspan dx="0.1" dy="-0.5" font-size="9.2">•</tspan><tspan dx="0.1" dy="0.5" font-size="14.5">büzülüp,</tspan><tspan dx="0.1" dy="-0.5" font-size="9.2">•</tspan><tspan dx="0.1" dy="0.5" font-size="14.5">kızı</tspan><tspan dx="0.1" dy="-0.5" font-size="9.2">•</tspan></text><text x="477" y="356.06" font-size="14.5" fill="#747474" font-family="Liberation Serif" textLength="257.9" lengthAdjust="spacingAndGlyphs" stroke="#747474" stroke-width="0.16">yanına<tspan dx="0.1" dy="-0.5" font-size="9.2">•</tspan><tspan dx="0.1" dy="0.5" font-size="14.5">çağırmış.</tspan><tspan dx="0.1" dy="-0.5" font-size="9.2">•</tspan><tspan dx="0.1" dy="0.5" font-size="14.5">Kırmızı</tspan><tspan dx="0.1" dy="-0.5" font-size="9.2">•</tspan><tspan dx="0.1" dy="0.5" font-size="14.5">başlıklı</tspan><tspan dx="0.1" dy="-0.5" font-size="9.2">•</tspan><tspan dx="0.1" dy="0.5" font-size="14.5">kız</tspan><tspan dx="0.1" dy="-0.5" font-size="9.2">•</tspan><tspan dx="0.1" dy="0.5" font-size="14.5">yatağa</tspan><tspan dx="0.1" dy="-0.5" font-size="9.2">•</tspan></text><text x="477" y="372.49" font-size="14.5" fill="#747474" font-family="Liberation Serif" textLength="159.1" lengthAdjust="spacingAndGlyphs" stroke="#747474" stroke-width="0.16">sokulmuş,<tspan dx="0.1" dy="-0.5" font-size="9.2">•</tspan><tspan dx="0.1" dy="0.5" font-size="14.5">kurda</tspan><tspan dx="0.1" dy="-0.5" font-size="9.2">•</tspan><tspan dx="0.1" dy="0.5" font-size="14.5">sormuş;<tspan stroke-width="0.25" fill="#7a7a7a" stroke="#7a7a7a">¶</tspan></tspan></text><path d="M716.50 399.60V403.80H709.80M712.60 400.80L709.80 403.80L712.60 406.80" stroke="#747474" stroke-width="1" fill="none"/><text x="477" y="408.1" font-size="14.5" fill="#747474" font-family="Liberation Serif" textLength="232.2" lengthAdjust="spacingAndGlyphs" stroke="#747474" stroke-width="0.16"><tspan stroke-width="0" fill="#8a8a8a">“</tspan>Ne<tspan dx="0.1" dy="-0.5" font-size="9.2">•</tspan><tspan dx="0.1" dy="0.5" font-size="14.5">kocaman</tspan><tspan dx="0.1" dy="-0.5" font-size="9.2">•</tspan><tspan dx="0.1" dy="0.5" font-size="14.5">kolların</tspan><tspan dx="0.1" dy="-0.5" font-size="9.2">•</tspan><tspan dx="0.1" dy="0.5" font-size="14.5">var</tspan><tspan dx="0.1" dy="-0.5" font-size="9.2">•</tspan><tspan dx="0.1" dy="0.5" font-size="14.5">büyükanne?<tspan stroke-width="0" fill="#8a8a8a">”</tspan></tspan></text><path d="M729.70 416.03V420.23H723.00M725.80 417.23L723.00 420.23L725.80 423.23" stroke="#747474" stroke-width="1" fill="none"/><text x="477" y="424.53" font-size="14.5" fill="#747474" font-family="Liberation Serif" textLength="245.4" lengthAdjust="spacingAndGlyphs" stroke="#747474" stroke-width="0.16"><tspan stroke-width="0" fill="#8a8a8a">“</tspan>Seni<tspan dx="0.1" dy="-0.5" font-size="9.2">•</tspan><tspan dx="0.1" dy="0.5" font-size="14.5">daha</tspan><tspan dx="0.1" dy="-0.5" font-size="9.2">•</tspan><tspan dx="0.1" dy="0.5" font-size="14.5">sıkı</tspan><tspan dx="0.1" dy="-0.5" font-size="9.2">•</tspan><tspan dx="0.1" dy="0.5" font-size="14.5">kucaklamak</tspan><tspan dx="0.1" dy="-0.5" font-size="9.2">•</tspan><tspan dx="0.1" dy="0.5" font-size="14.5">için</tspan><tspan dx="0.1" dy="-0.5" font-size="9.2">•</tspan><tspan dx="0.1" dy="0.5" font-size="14.5">yavrum!<tspan stroke-width="0" fill="#8a8a8a">”</tspan></tspan></text><path d="M731.50 432.46V436.66H724.80M727.60 433.66L724.80 436.66L727.60 439.66" stroke="#747474" stroke-width="1" fill="none"/><text x="477" y="440.96" font-size="14.5" fill="#747474" font-family="Liberation Serif" textLength="247.2" lengthAdjust="spacingAndGlyphs" stroke="#747474" stroke-width="0.16"><tspan stroke-width="0" fill="#8a8a8a">“</tspan>Ne<tspan dx="0.1" dy="-0.5" font-size="9.2">•</tspan><tspan dx="0.1" dy="0.5" font-size="14.5">kocaman</tspan><tspan dx="0.1" dy="-0.5" font-size="9.2">•</tspan><tspan dx="0.1" dy="0.5" font-size="14.5">kulakların</tspan><tspan dx="0.1" dy="-0.5" font-size="9.2">•</tspan><tspan dx="0.1" dy="0.5" font-size="14.5">var</tspan><tspan dx="0.1" dy="-0.5" font-size="9.2">•</tspan><tspan dx="0.1" dy="0.5" font-size="14.5">büyükanne?<tspan stroke-width="0" fill="#8a8a8a">”</tspan></tspan></text><path d="M695.70 448.89V453.09H689.00M691.80 450.09L689.00 453.09L691.80 456.09" stroke="#747474" stroke-width="1" fill="none"/><text x="477" y="457.39" font-size="14.5" fill="#747474" font-family="Liberation Serif" textLength="211.4" lengthAdjust="spacingAndGlyphs" stroke="#747474" stroke-width="0.16"><tspan stroke-width="0" fill="#8a8a8a">“</tspan>Seni<tspan dx="0.1" dy="-0.5" font-size="9.2">•</tspan><tspan dx="0.1" dy="0.5" font-size="14.5">daha</tspan><tspan dx="0.1" dy="-0.5" font-size="9.2">•</tspan><tspan dx="0.1" dy="0.5" font-size="14.5">iyi</tspan><tspan dx="0.1" dy="-0.5" font-size="9.2">•</tspan><tspan dx="0.1" dy="0.5" font-size="14.5">işitmek</tspan><tspan dx="0.1" dy="-0.5" font-size="9.2">•</tspan><tspan dx="0.1" dy="0.5" font-size="14.5">için</tspan><tspan dx="0.1" dy="-0.5" font-size="9.2">•</tspan><tspan dx="0.1" dy="0.5" font-size="14.5">yavrum.<tspan stroke-width="0" fill="#8a8a8a">”</tspan></tspan></text><path d="M696.70 465.32V469.52H690.00M692.80 466.52L690.00 469.52L692.80 472.52" stroke="#747474" stroke-width="1" fill="none"/><text x="477" y="473.82" font-size="14.5" fill="#747474" font-family="Liberation Serif" textLength="212.4" lengthAdjust="spacingAndGlyphs" stroke="#747474" stroke-width="0.16"><tspan stroke-width="0" fill="#8a8a8a">“</tspan>Ne<tspan dx="0.1" dy="-0.5" font-size="9.2">•</tspan><tspan dx="0.1" dy="0.5" font-size="14.5">kocaman</tspan><tspan dx="0.1" dy="-0.5" font-size="9.2">•</tspan><tspan dx="0.1" dy="0.5" font-size="14.5">ağzın</tspan><tspan dx="0.1" dy="-0.5" font-size="9.2">•</tspan><tspan dx="0.1" dy="0.5" font-size="14.5">var</tspan><tspan dx="0.1" dy="-0.5" font-size="9.2">•</tspan><tspan dx="0.1" dy="0.5" font-size="14.5">büyükanne?</tspan></text><text x="477" y="490.25" font-size="14.5" fill="#747474" font-family="Liberation Serif" textLength="166.2" lengthAdjust="spacingAndGlyphs" stroke="#747474" stroke-width="0.16"><tspan stroke-width="0" fill="#8a8a8a">“</tspan>Seni<tspan dx="0.1" dy="-0.5" font-size="9.2">•</tspan><tspan dx="0.1" dy="0.5" font-size="14.5">daha</tspan><tspan dx="0.1" dy="-0.5" font-size="9.2">•</tspan><tspan dx="0.1" dy="0.5" font-size="14.5">iyi</tspan><tspan dx="0.1" dy="-0.5" font-size="9.2">•</tspan><tspan dx="0.1" dy="0.5" font-size="14.5">yemek</tspan><tspan dx="0.1" dy="-0.5" font-size="9.2">•</tspan><tspan dx="0.1" dy="0.5" font-size="14.5">için!<tspan stroke-width="0" fill="#8a8a8a">”</tspan><tspan stroke-width="0.25" fill="#7a7a7a" stroke="#7a7a7a">¶</tspan></tspan></text><text x="477" y="526.7" font-size="14.5" fill="#747474" font-family="Liberation Serif" textLength="261.9" lengthAdjust="spacingAndGlyphs" stroke="#747474" stroke-width="0.16">Kurdun<tspan dx="0.1" dy="-0.5" font-size="9.2">•</tspan><tspan dx="0.1" dy="0.5" font-size="14.5">böyle</tspan><tspan dx="0.1" dy="-0.5" font-size="9.2">•</tspan><tspan dx="0.1" dy="0.5" font-size="14.5">demesiyle</tspan><tspan dx="0.1" dy="-0.5" font-size="9.2">•</tspan><tspan dx="0.1" dy="0.5" font-size="14.5">kırmızı</tspan><tspan dx="0.1" dy="-0.5" font-size="9.2">•</tspan><tspan dx="0.1" dy="0.5" font-size="14.5">başlıklı</tspan><tspan dx="0.1" dy="-0.5" font-size="9.2">•</tspan><tspan dx="0.1" dy="0.5" font-size="14.5">kız</tspan><tspan dx="0.1" dy="-0.5" font-size="9.2">•</tspan></text><text x="477" y="543.13" font-size="14.5" fill="#747474" font-family="Liberation Serif" textLength="271.6" lengthAdjust="spacingAndGlyphs" stroke="#747474" stroke-width="0.16">üzerine<tspan dx="0.1" dy="-0.5" font-size="9.2">•</tspan><tspan dx="0.1" dy="0.5" font-size="14.5">atılıp</tspan><tspan dx="0.1" dy="-0.5" font-size="9.2">•</tspan><tspan dx="0.1" dy="0.5" font-size="14.5">bir</tspan><tspan dx="0.1" dy="-0.5" font-size="9.2">•</tspan><tspan dx="0.1" dy="0.5" font-size="14.5">lokmada</tspan><tspan dx="0.1" dy="-0.5" font-size="9.2">•</tspan><tspan dx="0.1" dy="0.5" font-size="14.5">yutması</tspan><tspan dx="0.1" dy="-0.5" font-size="9.2">•</tspan><tspan dx="0.1" dy="0.5" font-size="14.5">bir</tspan><tspan dx="0.1" dy="-0.5" font-size="9.2">•</tspan><tspan dx="0.1" dy="0.5" font-size="14.5">olmuş.</tspan><tspan dx="0.1" dy="-0.5" font-size="9.2">•</tspan></text><text x="477" y="559.56" font-size="14.5" fill="#747474" font-family="Liberation Serif" textLength="254.0" lengthAdjust="spacingAndGlyphs" stroke="#747474" stroke-width="0.16">karnı<tspan dx="0.1" dy="-0.5" font-size="9.2">•</tspan><tspan dx="0.1" dy="0.5" font-size="14.5">doyunca</tspan><tspan dx="0.1" dy="-0.5" font-size="9.2">•</tspan><tspan dx="0.1" dy="0.5" font-size="14.5">uykusu</tspan><tspan dx="0.1" dy="-0.5" font-size="9.2">•</tspan><tspan dx="0.1" dy="0.5" font-size="14.5">gelmiş</tspan><tspan dx="0.1" dy="-0.5" font-size="9.2">•</tspan><tspan dx="0.1" dy="0.5" font-size="14.5">kurdun</tspan><tspan dx="0.1" dy="-0.5" font-size="9.2">•</tspan><tspan dx="0.1" dy="0.5" font-size="14.5">yine</tspan><tspan dx="0.1" dy="-0.5" font-size="9.2">•</tspan></text><text x="477" y="575.99" font-size="14.5" fill="#747474" font-family="Liberation Serif" textLength="276.3" lengthAdjust="spacingAndGlyphs" stroke="#747474" stroke-width="0.16">yatağa<tspan dx="0.1" dy="-0.5" font-size="9.2">•</tspan><tspan dx="0.1" dy="0.5" font-size="14.5">yatmış,</tspan><tspan dx="0.1" dy="-0.5" font-size="9.2">•</tspan><tspan dx="0.1" dy="0.5" font-size="14.5">horul</tspan><tspan dx="0.1" dy="-0.5" font-size="9.2">•</tspan><tspan dx="0.1" dy="0.5" font-size="14.5">horul</tspan><tspan dx="0.1" dy="-0.5" font-size="9.2">•</tspan><tspan dx="0.1" dy="0.5" font-size="14.5">uyumaya</tspan><tspan dx="0.1" dy="-0.5" font-size="9.2">•</tspan><tspan dx="0.1" dy="0.5" font-size="14.5">başlamış.</tspan><tspan dx="0.1" dy="-0.5" font-size="9.2">•</tspan></text><text x="477" y="592.42" font-size="14.5" fill="#747474" font-family="Liberation Serif" textLength="223.4" lengthAdjust="spacingAndGlyphs" stroke="#747474" stroke-width="0.16">O<tspan dx="0.1" dy="-0.5" font-size="9.2">•</tspan><tspan dx="0.1" dy="0.5" font-size="14.5">sırada</tspan><tspan dx="0.1" dy="-0.5" font-size="9.2">•</tspan><tspan dx="0.1" dy="0.5" font-size="14.5">kulübenin</tspan><tspan dx="0.1" dy="-0.5" font-size="9.2">•</tspan><tspan dx="0.1" dy="0.5" font-size="14.5">yanından</tspan><tspan dx="0.1" dy="-0.5" font-size="9.2">•</tspan><tspan dx="0.1" dy="0.5" font-size="14.5">bir</tspan><tspan dx="0.1" dy="-0.5" font-size="9.2">•</tspan><tspan dx="0.1" dy="0.5" font-size="14.5">avcı</tspan><tspan dx="0.1" dy="-0.5" font-size="9.2">•</tspan></text><text x="477" y="608.85" font-size="14.5" fill="#747474" font-family="Liberation Serif" textLength="239.1" lengthAdjust="spacingAndGlyphs" stroke="#747474" stroke-width="0.16">geçiyormuş<tspan dx="0.1" dy="-0.5" font-size="9.2">•</tspan><tspan dx="0.1" dy="0.5" font-size="14.5">büyükanneyi</tspan><tspan dx="0.1" dy="-0.5" font-size="9.2">•</tspan><tspan dx="0.1" dy="0.5" font-size="14.5">ziyaret</tspan><tspan dx="0.1" dy="-0.5" font-size="9.2">•</tspan><tspan dx="0.1" dy="0.5" font-size="14.5">etmek</tspan><tspan dx="0.1" dy="-0.5" font-size="9.2">•</tspan></text><text x="477" y="625.28" font-size="14.5" fill="#747474" font-family="Liberation Serif" textLength="248.0" lengthAdjust="spacingAndGlyphs" stroke="#747474" stroke-width="0.16">istemiş,<tspan dx="0.1" dy="-0.5" font-size="9.2">•</tspan><tspan dx="0.1" dy="0.5" font-size="14.5">kulübeye</tspan><tspan dx="0.1" dy="-0.5" font-size="9.2">•</tspan><tspan dx="0.1" dy="0.5" font-size="14.5">girmiş.</tspan><tspan dx="0.1" dy="-0.5" font-size="9.2">•</tspan><tspan dx="0.1" dy="0.5" font-size="14.5">Kurdun</tspan><tspan dx="0.1" dy="-0.5" font-size="9.2">•</tspan><tspan dx="0.1" dy="0.5" font-size="14.5">yatakta</tspan><tspan dx="0.1" dy="-0.5" font-size="9.2">•</tspan></text><text x="477" y="641.71" font-size="14.5" fill="#747474" font-family="Liberation Serif" textLength="254.8" lengthAdjust="spacingAndGlyphs" stroke="#747474" stroke-width="0.16">yattığını<tspan dx="0.1" dy="-0.5" font-size="9.2">•</tspan><tspan dx="0.1" dy="0.5" font-size="14.5">görünce</tspan><tspan dx="0.1" dy="-0.5" font-size="9.2">•</tspan><tspan dx="0.1" dy="0.5" font-size="14.5">her</tspan><tspan dx="0.1" dy="-0.5" font-size="9.2">•</tspan><tspan dx="0.1" dy="0.5" font-size="14.5">şeyi</tspan><tspan dx="0.1" dy="-0.5" font-size="9.2">•</tspan><tspan dx="0.1" dy="0.5" font-size="14.5">anlamış.</tspan><tspan dx="0.1" dy="-0.5" font-size="9.2">•</tspan><tspan dx="0.1" dy="0.5" font-size="14.5">Hemen</tspan><tspan dx="0.1" dy="-0.5" font-size="9.2">•</tspan></text><text x="477" y="658.14" font-size="14.5" fill="#747474" font-family="Liberation Serif" textLength="236.5" lengthAdjust="spacingAndGlyphs" stroke="#747474" stroke-width="0.16">bıçağını<tspan dx="0.1" dy="-0.5" font-size="9.2">•</tspan><tspan dx="0.1" dy="0.5" font-size="14.5">çekmiş</tspan><tspan dx="0.1" dy="-0.5" font-size="9.2">•</tspan><tspan dx="0.1" dy="0.5" font-size="14.5">kurdun</tspan><tspan dx="0.1" dy="-0.5" font-size="9.2">•</tspan><tspan dx="0.1" dy="0.5" font-size="14.5">karnını</tspan><tspan dx="0.1" dy="-0.5" font-size="9.2">•</tspan><tspan dx="0.1" dy="0.5" font-size="14.5">yarmış,</tspan><tspan dx="0.1" dy="-0.5" font-size="9.2">•</tspan></text><text x="477" y="674.57" font-size="14.5" fill="#747474" font-family="Liberation Serif" textLength="255.9" lengthAdjust="spacingAndGlyphs" stroke="#747474" stroke-width="0.16">kurdun<tspan dx="0.1" dy="-0.5" font-size="9.2">•</tspan><tspan dx="0.1" dy="0.5" font-size="14.5">karnını</tspan><tspan dx="0.1" dy="-0.5" font-size="9.2">•</tspan><tspan dx="0.1" dy="0.5" font-size="14.5">yarınca</tspan><tspan dx="0.1" dy="-0.5" font-size="9.2">•</tspan><tspan dx="0.1" dy="0.5" font-size="14.5">önce</tspan><tspan dx="0.1" dy="-0.5" font-size="9.2">•</tspan><tspan dx="0.1" dy="0.5" font-size="14.5">kırmızı</tspan><tspan dx="0.1" dy="-0.5" font-size="9.2">•</tspan><tspan dx="0.1" dy="0.5" font-size="14.5">başlık</tspan><tspan dx="0.1" dy="-0.5" font-size="9.2">•</tspan></text><text x="477" y="691.0" font-size="14.5" fill="#747474" font-family="Liberation Serif" textLength="271.6" lengthAdjust="spacingAndGlyphs" stroke="#747474" stroke-width="0.16">ilişmiş<tspan dx="0.1" dy="-0.5" font-size="9.2">•</tspan><tspan dx="0.1" dy="0.5" font-size="14.5">avcının</tspan><tspan dx="0.1" dy="-0.5" font-size="9.2">•</tspan><tspan dx="0.1" dy="0.5" font-size="14.5">gözüne</tspan><tspan dx="0.1" dy="-0.5" font-size="9.2">•</tspan><tspan dx="0.1" dy="0.5" font-size="14.5">derken,</tspan><tspan dx="0.1" dy="-0.5" font-size="9.2">•</tspan><tspan dx="0.1" dy="0.5" font-size="14.5">kırmızı</tspan><tspan dx="0.1" dy="-0.5" font-size="9.2">•</tspan><tspan dx="0.1" dy="0.5" font-size="14.5">başlıklı</tspan><tspan dx="0.1" dy="-0.5" font-size="9.2">•</tspan></text><polyline points="354.10,272.80 356.10,270.40 358.10,272.80 360.10,270.40 362.10,272.80 364.10,270.40 366.10,272.80 368.10,270.40 370.10,272.80 372.10,270.40 374.10,272.80 376.10,270.40 378.10,272.80 380.10,270.40 382.10,272.80 384.10,270.40 386.10,272.80 388.10,270.40 390.10,272.80 392.10,270.40 394.10,272.80 396.10,270.40 398.10,272.80 400.10,270.40 402.10,272.80 404.10,270.40 406.10,272.80 408.10,270.40 410.10,272.80 412.10,270.40 414.10,272.80" fill="none" stroke="#ff0000" stroke-width="1.2"/><polyline points="364.00,425.10 366.00,422.70 368.00,425.10 370.00,422.70 372.00,425.10 374.00,422.70 376.00,425.10" fill="none" stroke="#3a6fd8" stroke-width="1.2"/><polyline points="477.40,562.10 479.40,559.70 481.40,562.10 483.40,559.70 485.40,562.10 487.40,559.70 489.40,562.10 491.40,559.70 493.40,562.10 495.40,559.70 497.40,562.10 499.40,559.70 501.40,562.10 503.40,559.70 505.40,562.10 507.40,559.70" fill="none" stroke="#3a6fd8" stroke-width="1.2"/><polyline points="565.20,579.50 567.20,577.10 569.20,579.50 571.20,577.10 573.20,579.50 575.20,577.10 577.20,579.50 579.20,577.10 581.20,579.50 583.20,577.10 585.20,579.50 587.20,577.10 589.20,579.50 591.20,577.10 593.20,579.50 595.20,577.10 597.20,579.50" fill="none" stroke="#ff0000" stroke-width="1.2"/><polyline points="601.10,579.50 603.10,577.10 605.10,579.50 607.10,577.10 609.10,579.50 611.10,577.10 613.10,579.50 615.10,577.10 617.10,579.50 619.10,577.10 621.10,579.50 623.10,577.10 625.10,579.50 627.10,577.10 629.10,579.50 631.10,577.10 633.10,579.50" fill="none" stroke="#ff0000" stroke-width="1.2"/><rect x="477" y="310" width="1" height="15.7" fill="#000000"/></svg></body></html>
